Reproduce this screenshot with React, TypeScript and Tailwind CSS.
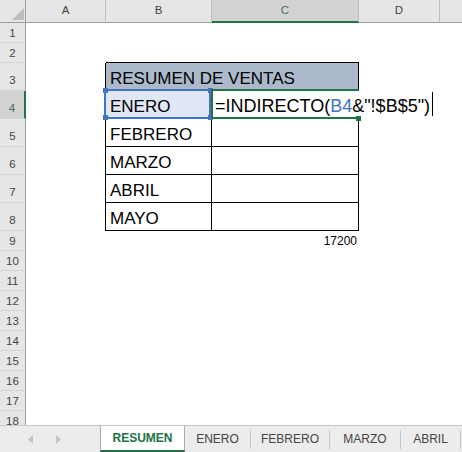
import clsx from "clsx";
import type { ReactNode } from "react";

const MONTHS = ["FEBRERO", "MARZO", "ABRIL", "MAYO"];

function RowHead({ n, tall }: { n: number; tall?: boolean }) {
  const active = n === 4;
  return (
    <div
      className={clsx(
        "w-[26px] shrink-0 h-full flex items-end justify-center text-[11.5px] leading-[12px] border-b border-b-[#d4d4d4]",
        tall ? "pb-[4px]" : "pb-[3px]",
        active
          ? "bg-[#d2d2d2] text-[#44705a] border-r-2 border-r-[#217346]"
          : "bg-[#e6e6e6] text-[#444] border-r border-r-[#9e9e9e]"
      )}
    >
      {n}
    </div>
  );
}

function Row({ n, tall, children }: { n: number; tall?: boolean; children?: ReactNode }) {
  return (
    <div className={clsx("flex shrink-0", tall ? "h-[28px]" : "h-[20px]")}>
      <RowHead n={n} tall={tall} />
      {children ?? <div className="flex-1" />}
    </div>
  );
}

function ColHead({ w, label, active }: { w: string; label: string; active?: boolean }) {
  return (
    <div
      className={clsx(
        w,
        "shrink-0 h-full flex items-center justify-center border-r border-r-[#bdbdbd]",
        active
          ? "bg-[#d2d2d2] text-[#44705a] border-b-2 border-b-[#217346]"
          : "border-b border-b-[#9e9e9e]"
      )}
    >
      {label}
    </div>
  );
}

function Handle({ className, color }: { className: string; color: string }) {
  return <div className={clsx("absolute w-[5px] h-[5px]", color, className)} />;
}

export default function App() {
  return (
    <div className="w-[462px] h-[452px] bg-white overflow-hidden flex flex-col font-['Liberation_Sans',Arial,sans-serif] text-black">
      <div className="h-[425px] shrink-0 overflow-hidden flex flex-col">
        {/* column headers */}
        <div className="flex h-[23px] shrink-0 bg-[#e6e6e6] text-[11.5px] text-[#444]">
          <div className="w-[26px] shrink-0 h-full flex items-end justify-end pr-[1px] pb-[2px] border-r border-r-[#9e9e9e] border-b border-b-[#9e9e9e]">
            <svg width="12" height="12" viewBox="0 0 12 12">
              <polygon points="12,0 12,12 0,12" fill="#bdbdbd" />
            </svg>
          </div>
          <ColHead w="w-[80px]" label="A" />
          <ColHead w="w-[106px]" label="B" />
          <ColHead w="w-[147px]" label="C" active />
          <ColHead w="w-[81px]" label="D" />
          <div className="flex-1 h-full border-b border-b-[#9e9e9e]" />
        </div>

        <Row n={1} />
        <Row n={2}>
          <div className="w-[80px] shrink-0" />
          <div className="w-[106px] shrink-0 border-b border-b-black" />
          <div className="w-[147px] shrink-0 border-b border-b-black" />
          <div className="flex-1" />
        </Row>

        {/* table title */}
        <Row n={3} tall>
          <div className="w-[80px] shrink-0 border-r border-r-black" />
          <div className="w-[253px] shrink-0 bg-[#acb9ca] border-r border-b border-black flex items-end pl-[4px] pb-[3px] text-[17px] leading-[17px] whitespace-nowrap">
            RESUMEN DE VENTAS
          </div>
          <div className="flex-1" />
        </Row>

        {/* editing row */}
        <Row n={4} tall>
          <div className="w-[80px] shrink-0 border-r border-r-black" />
          <div className="w-[106px] shrink-0 relative bg-[#dfe7f4] flex items-end pl-[4px] pb-[4px] text-[17px] leading-[17px]">
            ENERO
            <div className="absolute left-[-2px] top-[-2px] right-[1px] bottom-0 border-2 border-[#4472c4]" />
            <Handle color="bg-[#4472c4]" className="left-[-3px] top-[-3px]" />
            <Handle color="bg-[#4472c4]" className="right-[-1px] top-[-3px]" />
            <Handle color="bg-[#4472c4]" className="left-[-3px] bottom-[-1px]" />
            <Handle color="bg-[#4472c4]" className="right-[-1px] bottom-[-1px]" />
          </div>
          <div className="w-[147px] shrink-0 relative z-10 flex items-end pl-[3px] pb-[4px] text-[18px] leading-[18px] whitespace-nowrap">
            <div className="absolute left-[-1px] top-[-2px] right-0 bottom-0 border-l-2 border-t-2 border-b-2 border-[#217346]" />
            <Handle color="bg-[#217346]" className="right-[-2px] bottom-[-2px]" />
            <span>
              =INDIRECTO(<span className="text-[#4472c4]">B4</span>&amp;"!$B$5")
              <span className="inline-block w-px h-[24px] bg-black ml-[2px] translate-y-[4px]" />
            </span>
          </div>
          <div className="flex-1" />
        </Row>

        {MONTHS.map((m, i) => (
          <Row key={m} n={5 + i} tall>
            <div className="w-[80px] shrink-0 border-r border-r-black" />
            <div className="w-[106px] shrink-0 border-r border-b border-black flex items-end pl-[4px] pb-[3px] text-[17px] leading-[17px]">
              {m}
            </div>
            <div className="w-[147px] shrink-0 border-r border-b border-black" />
            <div className="flex-1" />
          </Row>
        ))}

        <Row n={9}>
          <div className="w-[80px] shrink-0" />
          <div className="w-[106px] shrink-0" />
          <div className="w-[147px] shrink-0 flex items-end justify-end pr-[2px] pb-[4px] text-[12px] leading-[12px]">
            17200
          </div>
          <div className="flex-1" />
        </Row>

        {[10, 11, 12, 13, 14, 15, 16, 17, 18].map((n) => (
          <Row key={n} n={n} />
        ))}
      </div>

      {/* sheet tabs */}
      <div className="h-[27px] shrink-0 flex bg-[#ececec] border-t border-t-[#c6c6c6] text-[12px] text-[#444]">
        <div className="w-[100px] shrink-0 flex items-center">
          <svg className="ml-[28px]" width="5" height="9" viewBox="0 0 5 9">
            <polygon points="5,0 5,9 0,4.5" fill="#c4c4c4" />
          </svg>
          <svg className="ml-[23px]" width="5" height="9" viewBox="0 0 5 9">
            <polygon points="0,0 0,9 5,4.5" fill="#c4c4c4" />
          </svg>
        </div>
        <div className="w-[85px] shrink-0 bg-white border-x border-x-[#ababab] border-b-2 border-b-[#217346] flex items-center justify-center font-bold text-[#217346]">
          RESUMEN
        </div>
        <div className="w-[65px] shrink-0 flex items-center justify-center">ENERO</div>
        <div className="w-px h-[19px] self-center bg-[#c6c6c6]" />
        <div className="w-[78px] shrink-0 flex items-center justify-center">FEBRERO</div>
        <div className="w-px h-[19px] self-center bg-[#c6c6c6]" />
        <div className="w-[70px] shrink-0 flex items-center justify-center">MARZO</div>
        <div className="w-px h-[19px] self-center bg-[#c6c6c6]" />
        <div className="w-[59px] shrink-0 flex items-center justify-center">ABRIL</div>
        <div className="w-px h-[19px] self-center bg-[#c6c6c6]" />
      </div>
    </div>
  );
}
